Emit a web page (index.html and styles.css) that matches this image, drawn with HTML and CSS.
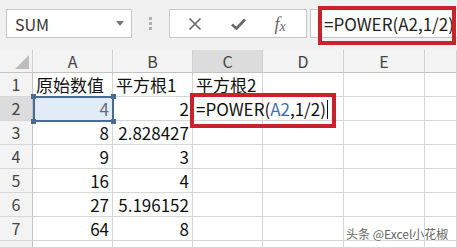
FILE: index.html
```html
<!DOCTYPE html>
<html lang="zh">
<head>
    <meta charset="UTF-8">
    <title>POWER 平方根</title>
    <link rel="stylesheet" href="styles.css">
</head>
<body>
    <div class="toolbar">
        <div class="name-box">
            <span>SUM</span>
            <svg class="caret" width="8" height="5" viewBox="0 0 8 5"><path d="M0 0 L8 0 L4 5 Z" fill="#777"/></svg>
        </div>
        <div class="grip">
            <i></i><i></i><i></i>
        </div>
        <div class="fx-buttons">
            <svg width="14" height="14" viewBox="0 0 14 14"><path d="M1.5 1.5 L12.5 12.5 M12.5 1.5 L1.5 12.5" stroke="#666" stroke-width="1.6" fill="none"/></svg>
            <svg width="15" height="12" viewBox="0 0 15 12"><path d="M1 6.5 L5.5 10.5 L14 1.5" stroke="#666" stroke-width="2.6" fill="none"/></svg>
            <span class="fx">f<sub>x</sub></span>
        </div>
        <div class="formula-input">=POWER(A2,1/2)</div>
        <div class="mark mark-bar"></div>
    </div>

    <div class="sheet">
        <div class="row head">
            <div class="corner"><svg width="14" height="14" viewBox="0 0 14 14"><path d="M14 0 L14 14 L0 14 Z" fill="#bdbdbd"/></svg></div>
            <div class="col w-a">A</div>
            <div class="col w-b">B</div>
            <div class="col w-c active">C</div>
            <div class="col w-d">D</div>
            <div class="col w-e">E</div>
            <div class="col w-f"></div>
        </div>
        <div class="row">
            <div class="rh">1</div>
            <div class="cell w-a">原始数值</div>
            <div class="cell w-b">平方根1</div>
            <div class="cell w-c">平方根2</div>
            <div class="cell w-d"></div>
            <div class="cell w-e"></div>
            <div class="cell w-f"></div>
        </div>
        <div class="row">
            <div class="rh active">2</div>
            <div class="cell w-a num">4</div>
            <div class="cell w-b num">2</div>
            <div class="cell w-c edit">=POWER(<span class="ref">A2</span>,1/2)<span class="cursor"></span></div>
            <div class="cell w-d"></div>
            <div class="cell w-e"></div>
            <div class="cell w-f"></div>
        </div>
        <div class="row">
            <div class="rh">3</div>
            <div class="cell w-a num">8</div>
            <div class="cell w-b num">2.828427</div>
            <div class="cell w-c"></div>
            <div class="cell w-d"></div>
            <div class="cell w-e"></div>
            <div class="cell w-f"></div>
        </div>
        <div class="row">
            <div class="rh">4</div>
            <div class="cell w-a num">9</div>
            <div class="cell w-b num">3</div>
            <div class="cell w-c"></div>
            <div class="cell w-d"></div>
            <div class="cell w-e"></div>
            <div class="cell w-f"></div>
        </div>
        <div class="row">
            <div class="rh">5</div>
            <div class="cell w-a num">16</div>
            <div class="cell w-b num">4</div>
            <div class="cell w-c"></div>
            <div class="cell w-d"></div>
            <div class="cell w-e"></div>
            <div class="cell w-f"></div>
        </div>
        <div class="row">
            <div class="rh">6</div>
            <div class="cell w-a num">27</div>
            <div class="cell w-b num">5.196152</div>
            <div class="cell w-c"></div>
            <div class="cell w-d"></div>
            <div class="cell w-e"></div>
            <div class="cell w-f"></div>
        </div>
        <div class="row">
            <div class="rh">7</div>
            <div class="cell w-a num">64</div>
            <div class="cell w-b num">8</div>
            <div class="cell w-c"></div>
            <div class="cell w-d"></div>
            <div class="cell w-e"></div>
            <div class="cell w-f"></div>
        </div>
        <div class="row tail">
            <div class="rh"></div>
            <div class="cell w-a"></div>
            <div class="cell w-b"></div>
            <div class="cell w-c"></div>
            <div class="cell w-d"></div>
            <div class="cell w-e"></div>
            <div class="cell w-f"></div>
        </div>

        <div class="ref-box"><i class="tl"></i><i class="tr"></i><i class="bl"></i><i class="br"></i></div>
        <div class="mark mark-cell"></div>
        <div class="watermark">头条 @Excel小花椒</div>
    </div>
</body>
</html>
```

FILE: styles.css
```css
body {
    margin: 0;
    width: 457px;
    height: 248px;
    overflow: hidden;
    background: #fff;
    font-family: "Noto Sans CJK SC", "Noto Sans", sans-serif;
    color: #222;
}
.toolbar {
    position: relative;
    height: 50px;
    display: flex;
    align-items: flex-start;
    padding-top: 9px;
    box-sizing: border-box;
    background: #f1f1f1;
}
.name-box {
    margin-left: 6px;
    width: 126px;
    height: 29px;
    box-sizing: border-box;
    border: 1px solid #c6c6c6;
    background: #fff;
    display: flex;
    align-items: center;
    justify-content: space-between;
    padding: 0 7px 0 8px;
    font-size: 16px;
    color: #333;
}
.grip {
    width: 37px;
    height: 29px;
    display: flex;
    flex-direction: column;
    align-items: center;
    justify-content: center;
    gap: 2px;
}
.grip i {
    width: 3px;
    height: 3px;
    background: #b0b0b0;
}
.fx-buttons {
    width: 138px;
    height: 29px;
    box-sizing: border-box;
    border: 1px solid #c6c6c6;
    background: #fff;
    display: flex;
    align-items: center;
    justify-content: space-around;
    padding: 0 6px 0 4px;
}
.fx {
    font-family: "Liberation Serif", serif;
    font-style: italic;
    font-size: 18px;
    color: #666;
    line-height: 1;
}
.fx sub {
    font-size: 14px;
    vertical-align: baseline;
    position: relative;
    top: 1px;
}
.formula-input {
    margin-left: 3px;
    flex: 1;
    height: 29px;
    box-sizing: border-box;
    border: 1px solid #c6c6c6;
    border-right: none;
    background: #fff;
    padding-left: 13px;
    font-size: 17px;
    line-height: 27px;
    color: #222;
}
.mark {
    position: absolute;
    box-sizing: border-box;
    border: 4px solid #c8232b;
}
.mark-bar {
    left: 318px;
    top: 6px;
    width: 138px;
    height: 39px;
}
.sheet {
    position: relative;
}
.row {
    display: flex;
    height: 24px;
}
.row.head {
    height: 23px;
}
.row.tail {
    height: 7px;
    overflow: hidden;
}
.corner, .rh, .col, .cell {
    box-sizing: border-box;
    flex-shrink: 0;
    height: 100%;
}
.corner {
    width: 33px;
    background: #f3f3f3;
    border-right: 1px solid #d0d0d0;
    border-bottom: 1px solid #c4c4c4;
    display: flex;
    align-items: flex-end;
    justify-content: flex-end;
    padding: 0 3px 3px 0;
}
.col {
    background: #f3f3f3;
    border-right: 1px solid #d0d0d0;
    border-bottom: 1px solid #c4c4c4;
    text-align: center;
    font-size: 16px;
    line-height: 22px;
    color: #444;
}
.col.active {
    background: #dcdcdc;
}
.rh {
    width: 33px;
    background: #f3f3f3;
    border-right: 1px solid #c4c4c4;
    border-bottom: 1px solid #d6d6d6;
    text-align: center;
    font-size: 16px;
    line-height: 23px;
    color: #444;
}
.rh.active {
    background: #dcdcdc;
}
.cell {
    border-right: 1px solid #d6d6d6;
    border-bottom: 1px solid #d6d6d6;
    font-size: 17px;
    line-height: 23px;
    padding: 0 3px;
    white-space: nowrap;
    color: #111;
}
.num {
    text-align: right;
}
.edit {
    position: relative;
    z-index: 1;
    overflow: visible;
    padding-left: 3px;
}
.ref {
    color: #3f6fb4;
}
.cursor {
    display: inline-block;
    width: 1px;
    height: 19px;
    background: #111;
    vertical-align: -3px;
    margin-left: 1px;
}
.w-a { width: 80px; }
.w-b { width: 80px; }
.w-c { width: 70px; }
.w-d { width: 81px; }
.w-e { width: 81px; }
.w-f { flex: 1; }
.ref-box {
    position: absolute;
    left: 33px;
    top: 46px;
    width: 81px;
    height: 26px;
    box-sizing: border-box;
    border: 2px solid #4b6c92;
    background: rgba(188, 212, 238, 0.45);
}
.ref-box i {
    position: absolute;
    width: 5px;
    height: 5px;
    background: #4b6c92;
}
.ref-box .tl { left: -4px; top: -4px; }
.ref-box .tr { right: -4px; top: -4px; }
.ref-box .bl { left: -4px; bottom: -4px; }
.ref-box .br { right: -4px; bottom: -4px; }
.mark-cell {
    left: 190px;
    top: 43px;
    width: 146px;
    height: 35px;
    z-index: 2;
}
.watermark {
    position: absolute;
    left: 346px;
    top: 175px;
    font-size: 12px;
    color: #666;
    text-shadow: 0 0 2px #fff, 0 0 2px #fff;
    z-index: 3;
}
```
